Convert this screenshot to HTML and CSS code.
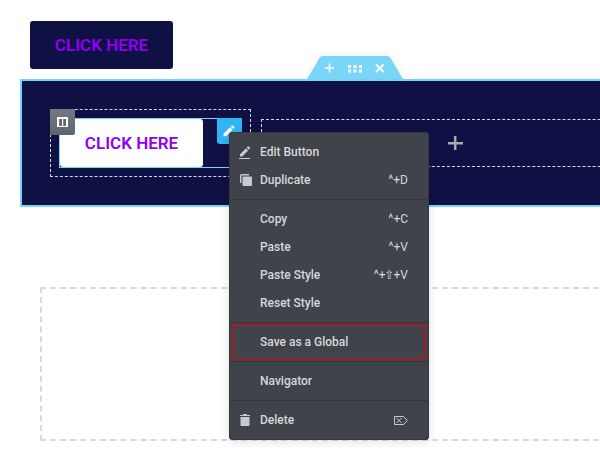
FILE: index.html
```html
<!DOCTYPE html>
<html lang="en">
<head>
<meta charset="utf-8">
<title>Page editor</title>
<link rel="stylesheet" href="styles.css">
</head>
<body>
<div class="page">
  <a class="button button-dark">CLICK HERE</a>
  <section class="section">
    <div class="section-tab">
      <svg width="96" height="23" viewBox="0 0 96 23">
        <path d="M0 23 L12.5 2 Q13.8 0 16 0 H80 Q82.200 0 83.500 2 L96 23 Z" fill="#79d6f7"/>
        <path d="M18 12 H27 M22.500 7.500 V16.500" stroke="#fff" stroke-width="1.500"/>
        <path d="M41 9h3v3h-3z M46.500 9h3v3h-3z M52 9h3v3h-3z M41 13.500h3v3h-3z M46.500 13.500h3v3h-3z M52 13.500h3v3h-3z" fill="#fff"/>
        <path d="M69 8.500 L76.500 16 M76.500 8.500 L69 16" stroke="#fff" stroke-width="1.800"/>
      </svg>
    </div>
    <div class="column">
      <div class="column-handle">
        <svg width="11" height="10" viewBox="0 0 11 10">
          <path d="M0 0H11V10H0Z" fill="#fff"/>
          <path d="M2 2H5V9H2Z M6 2H9V9H6Z" fill="#5f676e"/>
          <path d="M2.500 2V9" stroke="#b4605c"/>
          <path d="M6.500 2V9" stroke="#8f8478"/>
        </svg>
      </div>
      <div class="widget">
        <a class="button button-light">CLICK HERE</a>
        <div class="widget-edit">
          <svg width="12" height="12" viewBox="0 0 12 12"><path d="M0.500 8.800 L7 2.300 L9.500 4.800 L3 11.300 H0.500Z M7.700 1.600 L8.900 0.500 Q9.400 0.100 9.900 0.500 L11.200 1.800 Q11.700 2.300 11.200 2.900 L10.200 4.100Z" fill="#fff"/></svg>
        </div>
      </div>
    </div>
    <div class="column-empty">
      <svg width="15" height="15" viewBox="0 0 15 15"><path d="M0 7.200H15M7.200 0V14" stroke="#a9aaac" stroke-width="2.500"/></svg>
    </div>
  </section>
  <div class="drop-area"></div>
</div>

<div class="menu">
  <div class="group">
    <div class="item">
      <span class="icon"><svg width="12" height="13" viewBox="0 0 12 13"><path d="M1 8.200 L7 2.200 L9.200 4.400 L3.200 10.400 H1Z M7.600 1.500 L8.700 0.500 Q9.200 0 9.700 0.500 L11 1.800 Q11.400 2.300 11 2.700 L9.900 3.800Z M0 12H11V13H0Z" fill="#c7cad0"/></svg></span>
      <span class="label">Edit Button</span>
    </div>
    <div class="item">
      <span class="icon"><svg width="13" height="12" viewBox="-1 0 13 12"><path d="M0.700 9V1.700Q0.700 0.700 1.700 0.700H9" fill="none" stroke="#c7cad0" stroke-width="1.400"/><rect x="2.500" y="2.500" width="9.500" height="9.500" rx="1" fill="#c7cad0"/></svg></span>
      <span class="label">Duplicate</span><span class="keys">^+D</span>
    </div>
  </div>
  <div class="group">
    <div class="item"><span class="icon"></span><span class="label">Copy</span><span class="keys">^+C</span></div>
    <div class="item"><span class="icon"></span><span class="label">Paste</span><span class="keys">^+V</span></div>
    <div class="item"><span class="icon"></span><span class="label">Paste Style</span><span class="keys">^+<span class="shift">⇧</span>+V</span></div>
    <div class="item"><span class="icon"></span><span class="label">Reset Style</span></div>
  </div>
  <div class="group highlighted">
    <div class="item"><span class="icon"></span><span class="label">Save as a Global</span></div>
  </div>
  <div class="group">
    <div class="item"><span class="icon"></span><span class="label">Navigator</span></div>
  </div>
  <div class="group">
    <div class="item">
      <span class="icon"><svg width="11" height="12" viewBox="-1 0 11 12"><path d="M3 0H7V1H10V2H0V1H3Z M0.500 3H9.500V11Q9.500 12 8.500 12H1.500Q0.500 12 0.500 11Z" fill="#c7cad0"/></svg></span>
      <span class="label">Delete</span>
      <span class="keys"><svg width="14" height="9" viewBox="0 0 14 9"><path d="M0.500 0.500H9.500L13.300 4.500L9.500 8.500H0.500Z M2.500 2L7.500 7M7.500 2L2.500 7" fill="none" stroke="#c7cad0"/></svg></span>
    </div>
  </div>
</div>
</body>
</html>
```
FILE: styles.css
```css
* { box-sizing: border-box; }

body {
  margin: 0;
  width: 600px;
  height: 460px;
  overflow: hidden;
  background: #fff;
  font-family: Roboto, sans-serif;
}

svg { display: block; }

.page {
  height: 460px;
  padding-top: 21px;
  overflow: hidden;
}

.button {
  display: flex;
  align-items: center;
  justify-content: center;
  width: 143px;
  height: 48px;
  padding-top: 1px;
  border-radius: 3px;
  color: #8f00f2;
  font-size: 17px;
  font-weight: 600;
  line-height: 17px;
}

.button-dark {
  margin-left: 30px;
  background: #0f1145;
}

.button-light { background: #fff; }

.section {
  position: relative;
  display: flex;
  align-items: flex-start;
  gap: 10px;
  width: 700px;
  height: 128px;
  margin: 10px 0 0 20px;
  padding: 28px;
  border: 2px solid #71d7f7;
  background: #0f1145;
}

.section-tab {
  position: absolute;
  top: -25px;
  left: 285px;
  filter: drop-shadow(0 -2px 3px rgba(0, 0, 0, 0.05));
}

.column {
  position: relative;
  flex: none;
  width: 201px;
  height: 68px;
  padding: 8px;
  border: 1px dashed #d5d8dc;
}

.column-handle {
  position: absolute;
  z-index: 1;
  top: -1px;
  left: -1px;
  display: flex;
  align-items: center;
  justify-content: center;
  width: 25px;
  height: 26px;
  padding-right: 1px;
  border-radius: 0 0 2px 0;
  background: linear-gradient(#737a81, #5d656d);
}

.widget {
  position: relative;
  width: 183px;
  height: 50px;
  border: 1px solid #71d7f7;
}

.widget-edit {
  position: absolute;
  top: -1px;
  right: -1px;
  display: flex;
  align-items: center;
  justify-content: center;
  width: 25px;
  height: 26px;
  padding-right: 1px;
  border-radius: 0 0 0 3px;
  background: #30b5f2;
}

.column-empty {
  display: flex;
  flex: none;
  align-items: center;
  width: 420px;
  height: 48px;
  margin-top: 10px;
  padding-left: 186px;
  border: 1px dashed #d5dadf;
}

.drop-area {
  width: 700px;
  height: 154px;
  margin: 80px 0 0 40px;
  border: 2px dashed #d5dadf;
}

.menu {
  position: absolute;
  top: 132px;
  left: 229px;
  width: 200px;
  border: 1px solid #35373c;
  border-radius: 3px;
  background: #404349;
  box-shadow: 0 2px 10px rgba(0, 0, 0, 0.12);
  color: #d5d8dc;
  font-size: 12px;
  font-weight: 500;
}

.group {
  position: relative;
  padding: 5px 0;
}

.group + .group { border-top: 1px solid #34363b; }

.highlighted::after {
  content: "";
  position: absolute;
  top: 2px;
  right: 2px;
  bottom: 2px;
  left: 3px;
  border: 1px solid #f00008;
}

.item {
  display: flex;
  align-items: center;
  height: 28px;
  padding: 0 20px 0 9px;
}

.icon { width: 21px; }

.keys {
  margin-left: auto;
  font-weight: 400;
}

.shift {
  font-family: "DejaVu Sans", sans-serif;
  font-size: 12px;
  line-height: 1;
  margin: 0 -1px;
}
```
